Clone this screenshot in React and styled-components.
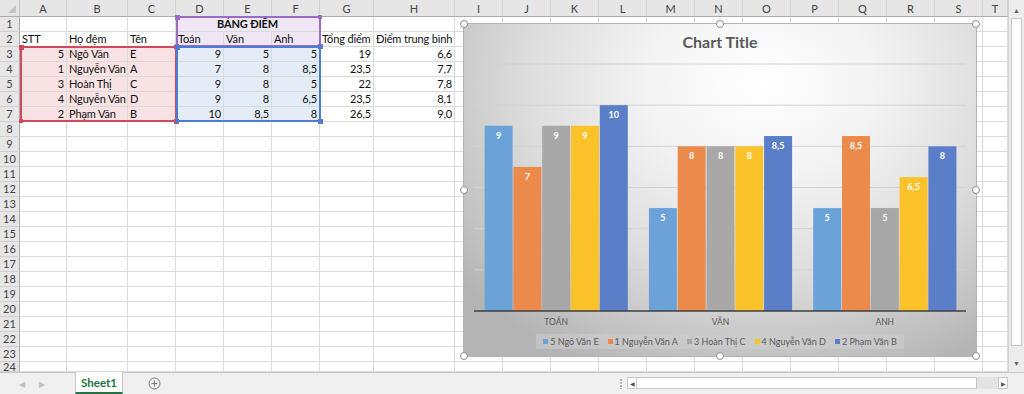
import styled, { createGlobalStyle } from "styled-components";

const GlobalStyle = createGlobalStyle`
  html, body {
    margin: 0;
    padding: 0;
    background: #ffffff;
  }
  body {
    font-family: Lato, "Noto Sans", sans-serif;
  }
`;

const COLS = [20, 47, 61, 48, 48, 48, 48, 54, 81, 48, 48, 48, 48, 48, 48, 48, 48, 48, 48, 48, 25];
const LETTERS = "ABCDEFGHIJKLMNOPQRST".split("");
const HEADER_H = 17;
const ROW_H = 15;

const TABLE = {
  2: ["STT", "Họ đệm", "Tên", "Toán", "Văn", "Anh", "Tổng điểm", "Điểm trung bình"],
  3: ["5", "Ngô Văn", "E", "9", "5", "5", "19", "6,6"],
  4: ["1", "Nguyễn Văn", "A", "7", "8", "8,5", "23,5", "7,7"],
  5: ["3", "Hoàn Thị", "C", "9", "8", "5", "22", "7,8"],
  6: ["4", "Nguyễn Văn", "D", "9", "8", "6,5", "23,5", "8,1"],
  7: ["2", "Phạm Văn", "B", "10", "8,5", "8", "26,5", "9,0"],
};

const SERIES = [
  { name: "5 Ngô Văn E", color: "#6ba3d9", values: [9, 5, 5] },
  { name: "1 Nguyễn Văn A", color: "#ec8a4b", values: [7, 8, 8.5] },
  { name: "3 Hoàn Thị C", color: "#a8a8a8", values: [9, 8, 5] },
  { name: "4 Nguyễn Văn D", color: "#fbc22a", values: [9, 8, 6.5] },
  { name: "2 Phạm Văn B", color: "#5a7fc8", values: [10, 8.5, 8] },
];
const CATEGORIES = ["TOÁN", "VĂN", "ANH"];

const TINTS = {
  red: "#f9e2e3",
  blue: "#e4ecf8",
  purple: "#efe7f5",
};

const colLeft = (i) => COLS.slice(0, i).reduce((a, b) => a + b, 0);
const rowTop = (r) => HEADER_H + (r - 1) * ROW_H;

function tintFor(row, col) {
  if (row >= 3 && row <= 7 && col >= 1 && col <= 3) return "red";
  if (row >= 3 && row <= 7 && col >= 4 && col <= 6) return "blue";
  if (row >= 1 && row <= 2 && col >= 4 && col <= 6) return "purple";
  return null;
}

function alignFor(row, col) {
  if (row >= 3 && (col === 1 || col >= 4)) return "flex-end";
  return "flex-start";
}

const Window = styled.div`
  width: 1024px;
  height: 394px;
  display: flex;
  flex-direction: column;
  overflow: hidden;
  background: #ffffff;
`;

const Main = styled.div`
  display: flex;
  height: 372px;
`;

const SheetArea = styled.div`
  position: relative;
  width: 1008px;
  height: 372px;
  overflow: hidden;
`;

const Grid = styled.div`
  display: grid;
  grid-template-columns: ${COLS.map((c) => `${c}px`).join(" ")};
  grid-template-rows: ${HEADER_H}px repeat(23, ${ROW_H}px) 10px;
`;

const Corner = styled.div`
  background: #e6e6e6;
  border-right: 1px solid #c6c6c6;
  border-bottom: 1px solid #ababab;
  box-sizing: border-box;
  position: relative;

  &::after {
    content: "";
    position: absolute;
    right: 3px;
    bottom: 3px;
    border-style: solid;
    border-width: 0 0 8px 8px;
    border-color: transparent transparent #c3c3c3 transparent;
  }
`;

const ColHead = styled.div`
  box-sizing: border-box;
  background: #e6e6e6;
  border-right: 1px solid #cfcfcf;
  border-bottom: 1px solid #ababab;
  color: #444444;
  font-size: 11px;
  display: flex;
  align-items: center;
  justify-content: center;
`;

const RowHead = styled.div`
  box-sizing: border-box;
  background: #e6e6e6;
  border-right: 1px solid #ababab;
  border-bottom: 1px solid #cfcfcf;
  color: #444444;
  font-size: 11px;
  display: flex;
  align-items: ${(p) => (p.$cut ? "flex-start" : "center")};
  justify-content: center;
  line-height: ${(p) => (p.$cut ? "10px" : "14px")};
  overflow: hidden;
`;

const Cell = styled.div`
  box-sizing: border-box;
  grid-column: span ${(p) => p.$span || 1};
  background: ${(p) => (p.$tint ? TINTS[p.$tint] : "#ffffff")};
  border-right: 1px solid #dadada;
  border-bottom: 1px solid #dadada;
  color: #111111;
  font-size: 11px;
  letter-spacing: -0.15px;
  font-weight: ${(p) => (p.$bold ? 700 : 400)};
  line-height: 14px;
  padding: 0 2px;
  display: flex;
  align-items: flex-end;
  justify-content: ${(p) => p.$align};
  white-space: nowrap;
  overflow: visible;
`;

const RangeBox = styled.div.attrs((p) => ({
  style: { left: p.$x, top: p.$y, width: p.$w, height: p.$h },
}))`
  position: absolute;
  box-sizing: border-box;
  border: 2px solid ${(p) => p.$color};
  pointer-events: none;

  &::before,
  &::after {
    content: "";
    position: absolute;
    width: 5px;
    height: 5px;
    background: ${(p) => p.$color};
  }
  &::before {
    left: -3px;
    top: -3px;
  }
  &::after {
    right: -4px;
    bottom: -4px;
  }
`;

const RangeDot = styled.span`
  position: absolute;
  width: 4px;
  height: 4px;
  background: ${(p) => p.$color};
  ${(p) => (p.$corner === "tr" ? "right: -3px; top: -3px;" : "left: -3px; bottom: -3px;")}
`;

const ChartFrame = styled.div`
  position: absolute;
  left: 463px;
  top: 23px;
  width: 514px;
  height: 334px;
  box-sizing: border-box;
  border: 1px solid #b4b4b4;
  background: radial-gradient(
    ellipse 75% 95% at 58% 18%,
    #ffffff 0%,
    #f3f3f3 30%,
    #dcdcdc 62%,
    #c4c4c4 85%,
    #b4b4b4 100%
  );
  display: flex;
  flex-direction: column;
  align-items: center;
`;

const ChartTitle = styled.div`
  height: 29px;
  padding-top: 8px;
  box-sizing: border-box;
  font-size: 16px;
  font-weight: 700;
  color: #595959;
  line-height: 20px;
`;

const Plot = styled.svg`
  display: block;
  width: 512px;
  height: 280px;
  font-family: Lato, "Noto Sans", sans-serif;
`;

const Legend = styled.div`
  margin-top: 1px;
  height: 15px;
  padding: 0 7px;
  display: flex;
  align-items: center;
  gap: 9px;
  background: rgba(205, 205, 205, 0.55);
  font-size: 9px;
  color: #595959;
  white-space: nowrap;
`;

const LegendItem = styled.div`
  display: flex;
  align-items: center;
  gap: 2px;
`;

const LegendMark = styled.span`
  width: 5px;
  height: 5px;
  background: ${(p) => p.$color};
`;

const Handle = styled.span`
  position: absolute;
  left: ${(p) => p.$x};
  top: ${(p) => p.$y};
  width: 8px;
  height: 8px;
  box-sizing: border-box;
  border-radius: 50%;
  background: #ffffff;
  border: 1px solid #8c8c8c;
  transform: translate(-50%, -50%);
`;

const VScroll = styled.div`
  width: 16px;
  height: 372px;
  box-sizing: border-box;
  background: #ececec;
  border-left: 1px solid #d4d4d4;
  display: flex;
  flex-direction: column;
  align-items: center;
  padding-top: 5px;
`;

const ArrowBtn = styled.div`
  width: 11px;
  height: 11px;
  display: flex;
  align-items: center;
  justify-content: center;
  color: #666666;
  font-size: 7px;
  line-height: 1;
`;

const VThumb = styled.div`
  width: 11px;
  height: 328px;
  margin: 2px 0 12px;
  box-sizing: border-box;
  background: #ffffff;
  border: 1px solid #c8c8c8;
`;

const TabBar = styled.div`
  height: 22px;
  box-sizing: border-box;
  background: #f0f0f0;
  border-top: 1px solid #c6c6c6;
  display: flex;
  align-items: stretch;
`;

const NavArrows = styled.div`
  width: 75px;
  display: flex;
  align-items: center;
  gap: 14px;
  padding-left: 19px;
  box-sizing: border-box;
  color: #c0c0c0;
  font-size: 8px;
`;

const SheetTab = styled.div`
  width: 48px;
  margin-top: -1px;
  box-sizing: border-box;
  background: #ffffff;
  border-left: 1px solid #c6c6c6;
  border-right: 1px solid #c6c6c6;
  border-bottom: 2px solid #217346;
  color: #217346;
  font-weight: 700;
  font-size: 11.5px;
  display: flex;
  align-items: center;
  justify-content: center;
`;

const AddSheet = styled.div`
  width: 62px;
  display: flex;
  align-items: center;
  justify-content: center;
`;

const Spacer = styled.div`
  flex: 1;
`;

const Grip = styled.div`
  width: 13px;
  display: flex;
  align-items: center;
  justify-content: center;

  &::before {
    content: "";
    width: 2px;
    height: 10px;
    background: repeating-linear-gradient(
      to bottom,
      #b5b5b5 0 2px,
      transparent 2px 3px
    );
  }
`;

const HScroll = styled.div`
  width: 381px;
  margin: 4px 16px 5px 0;
  display: flex;
  align-items: stretch;
  background: #e4e4e4;
`;

const HArrow = styled.div`
  width: 10px;
  box-sizing: border-box;
  background: #ffffff;
  border: 1px solid #c8c8c8;
  color: #555555;
  font-size: 6px;
  display: flex;
  align-items: center;
  justify-content: center;
`;

const HThumb = styled.div`
  width: 340px;
  box-sizing: border-box;
  background: #ffffff;
  border: 1px solid #c8c8c8;
  border-left: none;
`;

function ChartPlot() {
  const axisY = 258;
  const unit = 247 / 12;
  const plotL = 10;
  const plotR = 502;
  const catW = 164.3;
  const barW = 28.8;
  const fmt = (v) => String(v).replace(".", ",");

  return (
    <Plot viewBox="0 0 512 280">
      {[2, 4, 6, 8, 10, 12].map((v) => (
        <line
          key={v}
          x1={plotL}
          x2={plotR}
          y1={axisY - v * unit}
          y2={axisY - v * unit}
          stroke="#d2d2d2"
          strokeWidth="1"
        />
      ))}
      {CATEGORIES.map((cat, ci) => {
        const start = plotL + ci * catW + 10.2;
        return (
          <g key={cat}>
            {SERIES.map((s, si) => {
              const v = s.values[ci];
              const h = v * unit;
              const x = start + si * barW;
              return (
                <g key={s.name}>
                  <rect
                    x={x + 0.4}
                    y={axisY - h}
                    width={barW - 0.8}
                    height={h}
                    fill={s.color}
                  />
                  <text
                    x={x + barW / 2}
                    y={axisY - h + 13}
                    textAnchor="middle"
                    fill="#ffffff"
                    fontSize="9"
                    fontWeight="700"
                  >
                    {fmt(v)}
                  </text>
                </g>
              );
            })}
            <text
              x={plotL + ci * catW + catW / 2}
              y={272}
              textAnchor="middle"
              fill="#595959"
              fontSize="8.5"
            >
              {cat}
            </text>
          </g>
        );
      })}
      <line x1={plotL} x2={plotR} y1={axisY} y2={axisY} stroke="#3f3f3f" strokeWidth="1.6" />
    </Plot>
  );
}

function Chart() {
  const handles = [
    ["0%", "0%"],
    ["50%", "0%"],
    ["100%", "0%"],
    ["0%", "50%"],
    ["100%", "50%"],
    ["0%", "100%"],
    ["50%", "100%"],
    ["100%", "100%"],
  ];
  return (
    <ChartFrame>
      <ChartTitle>Chart Title</ChartTitle>
      <ChartPlot />
      <Legend>
        {SERIES.map((s) => (
          <LegendItem key={s.name}>
            <LegendMark $color={s.color} />
            {s.name}
          </LegendItem>
        ))}
      </Legend>
      {handles.map(([x, y]) => (
        <Handle key={x + y} $x={x} $y={y} />
      ))}
    </ChartFrame>
  );
}

function SheetGrid() {
  const cells = [<Corner key="corner" />];
  LETTERS.forEach((l) => cells.push(<ColHead key={"h" + l}>{l}</ColHead>));

  for (let r = 1; r <= 24; r++) {
    cells.push(
      <RowHead key={"r" + r} $cut={r === 24}>
        {r}
      </RowHead>
    );
    for (let c = 1; c <= 20; c++) {
      if (r === 1 && (c === 5 || c === 6)) continue;
      const key = r + "-" + c;
      if (r === 1 && c === 4) {
        cells.push(
          <Cell key={key} $span={3} $tint="purple" $align="center" $bold>
            BẢNG ĐIỂM
          </Cell>
        );
        continue;
      }
      const text = TABLE[r] && c <= 8 ? TABLE[r][c - 1] : "";
      cells.push(
        <Cell key={key} $tint={tintFor(r, c)} $align={alignFor(r, c)}>
          {text}
        </Cell>
      );
    }
  }
  return <Grid>{cells}</Grid>;
}

export default function App() {
  const red = { x: colLeft(1), y: rowTop(3), w: colLeft(4) - colLeft(1), h: ROW_H * 5 };
  const purple = { x: colLeft(4), y: rowTop(1), w: colLeft(7) - colLeft(4), h: ROW_H * 2 };
  const blue = { x: colLeft(4), y: rowTop(3), w: colLeft(7) - colLeft(4), h: ROW_H * 5 };

  return (
    <Window>
      <GlobalStyle />
      <Main>
        <SheetArea>
          <SheetGrid />
          <RangeBox $color="#d0495a" $x={red.x} $y={red.y - 1} $w={red.w + 1} $h={red.h + 1}>
            <RangeDot $color="#d0495a" $corner="tr" />
            <RangeDot $color="#d0495a" $corner="bl" />
          </RangeBox>
          <RangeBox $color="#9b6cc6" $x={purple.x} $y={purple.y - 1} $w={purple.w + 1} $h={purple.h + 1}>
            <RangeDot $color="#9b6cc6" $corner="tr" />
            <RangeDot $color="#9b6cc6" $corner="bl" />
          </RangeBox>
          <RangeBox $color="#4f7bd0" $x={blue.x} $y={blue.y - 1} $w={blue.w + 1} $h={blue.h + 1}>
            <RangeDot $color="#4f7bd0" $corner="tr" />
            <RangeDot $color="#4f7bd0" $corner="bl" />
          </RangeBox>
          <Chart />
        </SheetArea>
        <VScroll>
          <ArrowBtn>▲</ArrowBtn>
          <VThumb />
          <ArrowBtn>▼</ArrowBtn>
        </VScroll>
      </Main>
      <TabBar>
        <NavArrows>
          <span>◀</span>
          <span>▶</span>
        </NavArrows>
        <SheetTab>Sheet1</SheetTab>
        <AddSheet>
          <svg width="13" height="13" viewBox="0 0 13 13">
            <circle cx="6.5" cy="6.5" r="5.5" fill="none" stroke="#7a7a7a" strokeWidth="1" />
            <path d="M6.5 3.5v6M3.5 6.5h6" stroke="#7a7a7a" strokeWidth="1.2" />
          </svg>
        </AddSheet>
        <Spacer />
        <Grip />
        <HScroll>
          <HArrow>◀</HArrow>
          <HThumb />
          <Spacer />
          <HArrow>▶</HArrow>
        </HScroll>
      </TabBar>
    </Window>
  );
}
